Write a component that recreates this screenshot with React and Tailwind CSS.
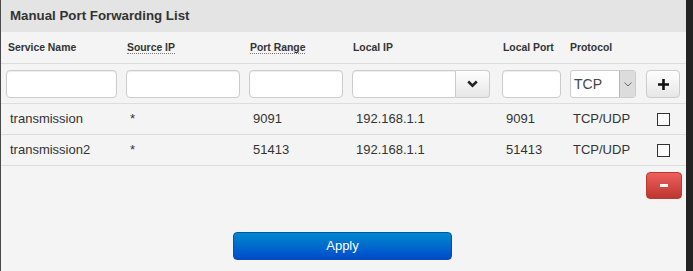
const RULES = [
  { name: "transmission", src: "*", range: "9091", ip: "192.168.1.1", port: "9091", proto: "TCP/UDP" },
  { name: "transmission2", src: "*", range: "51413", ip: "192.168.1.1", port: "51413", proto: "TCP/UDP" },
];

const COLS = "grid grid-cols-[111px_114px_94px_141px_59px_67px_34px] gap-x-[9px] px-[5px]";
const inputCls = "h-[28px] rounded-[4px] border border-[#cccccc] bg-white shadow-[inset_0_1px_1px_rgba(0,0,0,0.075)]";

export default function App() {
  return (
    <div className="flex h-[271px] w-[693px] bg-[#232323]" style={{ fontFamily: '"Liberation Sans", Arial, sans-serif' }}>
      <div className="flex w-[686px] flex-col border-l border-[#4a4a4a] bg-[#f4f4f4] text-[#333]">

        {/* Header */}
        <div className="flex h-[32px] items-center bg-[#e4e4e4] pl-[9px]">
          <h2 className="text-[13.3px] font-bold text-[#333]">Manual Port Forwarding List</h2>
        </div>

        {/* Column heads */}
        <div className={`${COLS} h-[32px] items-center border-b border-[#dddddd] text-[10.4px] font-bold text-[#333]`}>
          <span className="pl-[2px]">Service Name</span>
          <span className="pl-[1px]"><span className="border-b border-dotted border-[#777]">Source IP</span></span>
          <span className="pl-[1px]"><span className="border-b border-dotted border-[#777]">Port Range</span></span>
          <span className="pl-[1px]">Local IP</span>
          <span className="pl-[1px]">Local Port</span>
          <span>Protocol</span>
          <span />
        </div>

        {/* Input row */}
        <div className={`${COLS} h-[40px] items-start border-b border-[#dddddd] pt-[6px]`}>
          <input className={`${inputCls} w-[111px]`} />
          <input className={`${inputCls} w-[114px]`} />
          <input className={`${inputCls} w-[94px]`} />
          <div className="flex h-[28px] w-[138px]">
            <input className="h-[28px] w-[104px] rounded-l-[4px] border border-[#cccccc] bg-white shadow-[inset_0_1px_1px_rgba(0,0,0,0.075)]" />
            <button className="flex h-[28px] w-[34px] items-center justify-center rounded-r-[4px] border border-l-0 border-[#cccccc] bg-gradient-to-b from-white to-[#e6e6e6]">
              <svg width="11" height="8" viewBox="0 0 11 8">
                <path d="M1.2 1.5 L5.5 5.6 L9.8 1.5" fill="none" stroke="#222" strokeWidth="2.6" strokeLinejoin="miter" />
              </svg>
            </button>
          </div>
          <input className={`${inputCls} w-[59px]`} />
          <div className="flex h-[28px] w-[66px] overflow-hidden rounded-[3px] border border-[#cccccc] bg-white">
            <span className="flex flex-1 items-center pl-[3px] text-[14px] text-[#444]">TCP</span>
            <span className="flex w-[16px] items-center justify-center border-l border-[#b5b5b5] bg-[#dcdcdc]">
              <svg width="8" height="5" viewBox="0 0 8 5">
                <path d="M0.5 0.5 L4 4 L7.5 0.5" fill="none" stroke="#666" strokeWidth="1" />
              </svg>
            </span>
          </div>
          <button className="flex h-[28px] w-[34px] items-center justify-center rounded-[4px] border border-[#cccccc] bg-gradient-to-b from-white to-[#e6e6e6]">
            <svg width="11" height="11" viewBox="0 0 11 11">
              <path d="M5.5 0 V11 M0 5.5 H11" stroke="#111" strokeWidth="2.6" />
            </svg>
          </button>
        </div>

        {/* Rules */}
        {RULES.map((r) => (
          <div key={r.name} className={`${COLS} h-[31px] items-center border-b border-[#dddddd] text-[13px] text-[#333]`}>
            <span className="pl-[4px]">{r.name}</span>
            <span className="pl-[4px]">{r.src}</span>
            <span className="pl-[4px]">{r.range}</span>
            <span className="pl-[4px]">{r.ip}</span>
            <span className="pl-[4px]">{r.port}</span>
            <span className="pl-[3px]">{r.proto}</span>
            <span className="flex pl-[11px]">
              <span className="h-[13px] w-[13px] border border-[#333] bg-white" />
            </span>
          </div>
        ))}

        {/* Remove */}
        <div className="flex justify-end pr-[4px] pt-[6px]">
          <button className="flex h-[27px] w-[36px] items-center justify-center rounded-[4px] border border-[#b83a33] bg-gradient-to-b from-[#ee5f5b] to-[#bd362f]">
            <span className="h-[3px] w-[8px] bg-white" />
          </button>
        </div>

        {/* Apply */}
        <div className="flex justify-center pt-[33px] pr-[2px]">
          <button className="h-[28px] w-[219px] rounded-[4px] border border-[#0050b8] bg-gradient-to-b from-[#0088cc] to-[#0048cc] text-[13px] text-white">
            Apply
          </button>
        </div>
      </div>
    </div>
  );
}
